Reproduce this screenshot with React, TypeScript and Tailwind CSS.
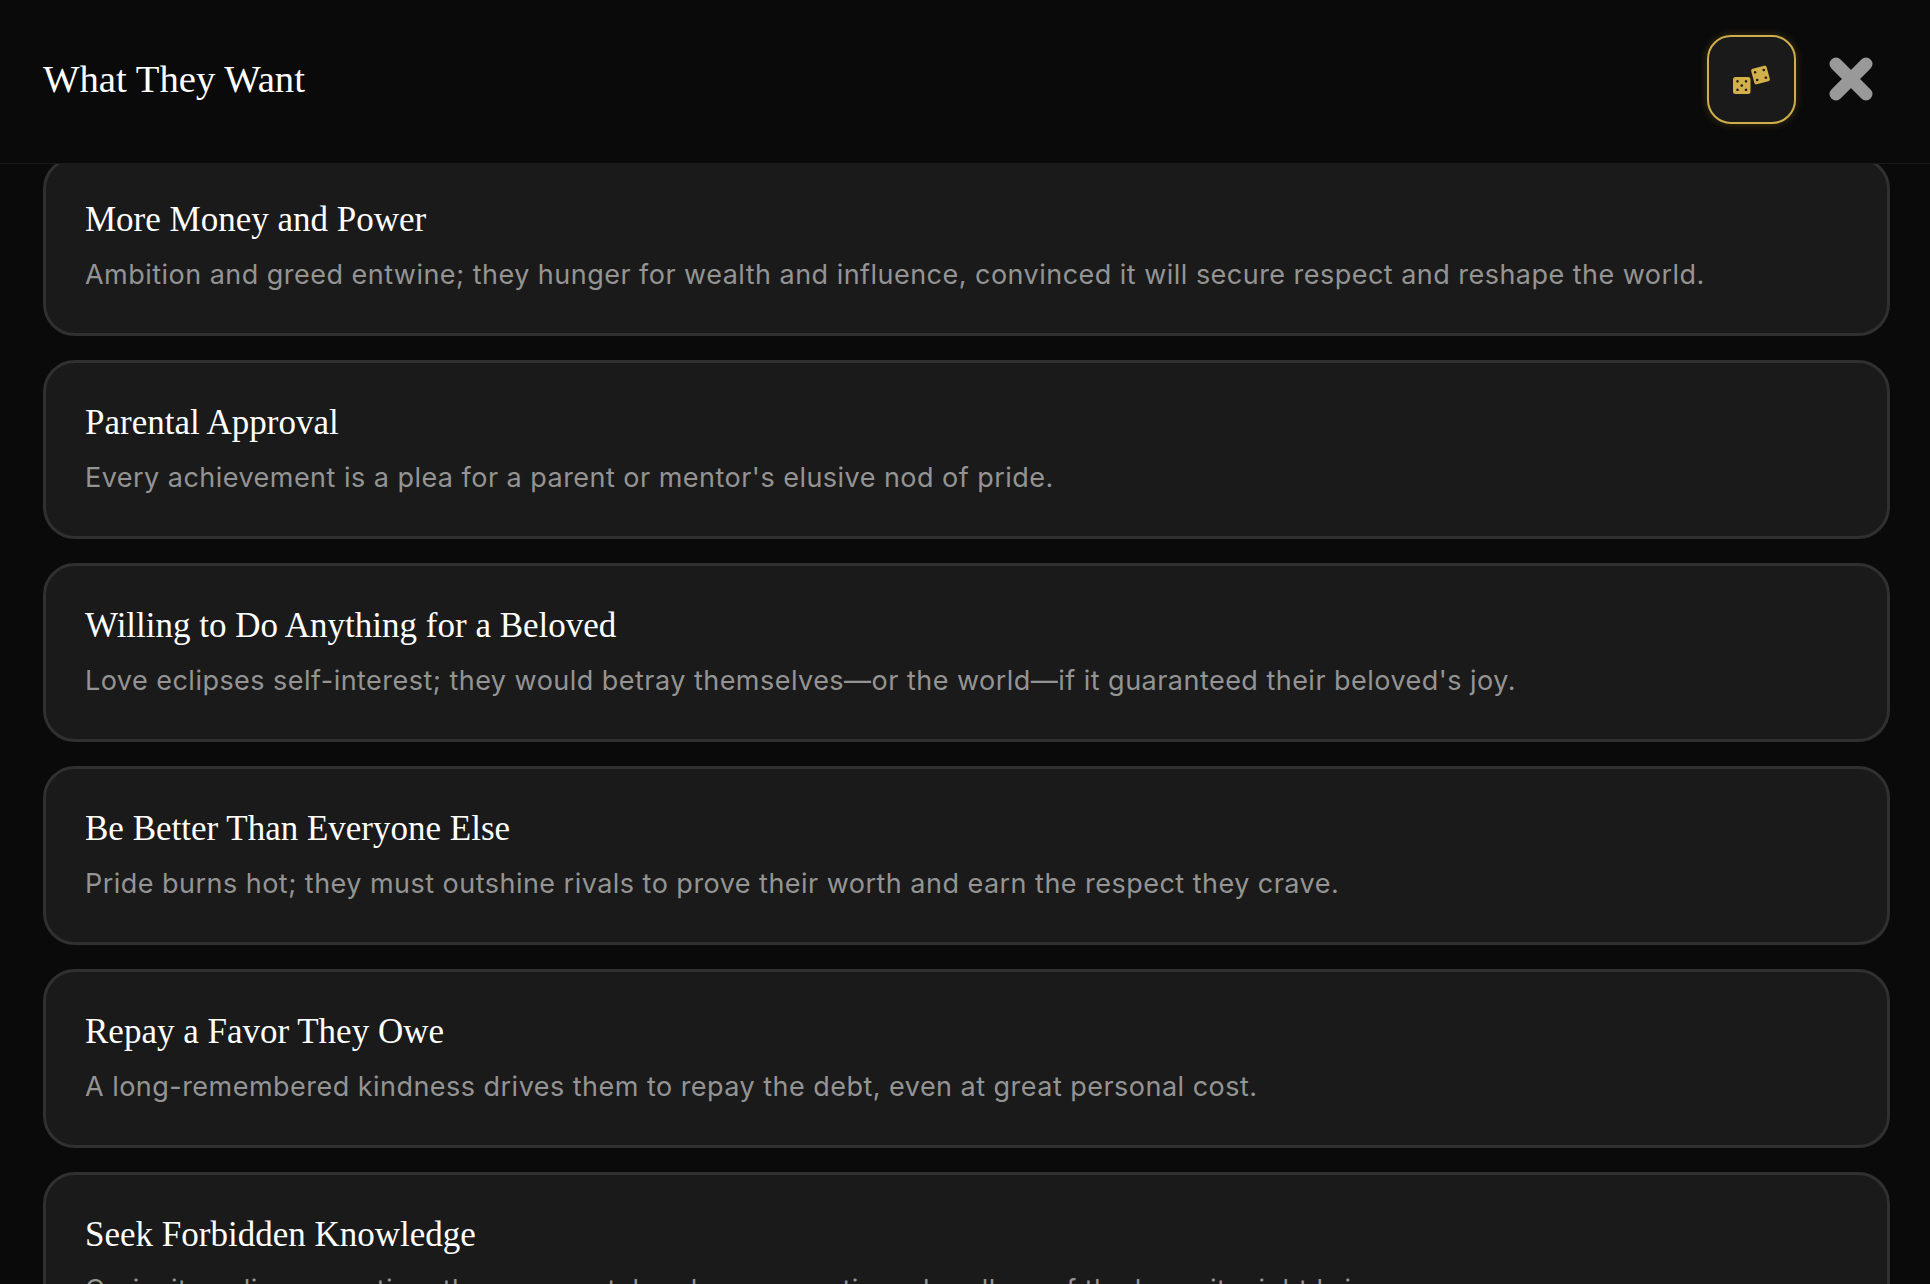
const items = [
  ["More Money and Power", "Ambition and greed entwine; they hunger for wealth and influence, convinced it will secure respect and reshape the world."],
  ["Parental Approval", "Every achievement is a plea for a parent or mentor's elusive nod of pride."],
  ["Willing to Do Anything for a Beloved", "Love eclipses self-interest; they would betray themselves—or the world—if it guaranteed their beloved's joy."],
  ["Be Better Than Everyone Else", "Pride burns hot; they must outshine rivals to prove their worth and earn the respect they crave."],
  ["Repay a Favor They Owe", "A long-remembered kindness drives them to repay the debt, even at great personal cost."],
  ["Seek Forbidden Knowledge", "Curiosity eclipses caution; they pursue taboo lore or creations, heedless of the harm it might bring."],
];

function Dice() {
  return (
    <svg width="37" height="29" viewBox="0 0 37 29" fill="#d4b04a">
      <path
        fillRule="evenodd"
        d="M2.500 12h12.500a2.500 2.500 0 0 1 2.500 2.500v12a2.500 2.500 0 0 1-2.500 2.500H2.500a2.500 2.500 0 0 1-2.500-2.500v-12a2.500 2.500 0 0 1 2.500-2.500ZM4.500 15a1.300 1.300 0 1 0 .01 0ZM13 15a1.300 1.300 0 1 0 .01 0ZM8.750 19.200a1.300 1.300 0 1 0 .01 0ZM4.500 23.500a1.300 1.300 0 1 0 .01 0ZM13 23.500a1.300 1.300 0 1 0 .01 0Z"
      />
      <g transform="rotate(-15 27.500 10)">
        <path
          fillRule="evenodd"
          d="M21.500 2h12a2 2 0 0 1 2 2v12a2 2 0 0 1-2 2h-12a2 2 0 0 1-2-2V4a2 2 0 0 1 2-2ZM23 4.700a1.300 1.300 0 1 0 .01 0ZM32 4.700a1.300 1.300 0 1 0 .01 0ZM23 12.700a1.300 1.300 0 1 0 .01 0ZM32 12.700a1.300 1.300 0 1 0 .01 0Z"
        />
      </g>
    </svg>
  );
}

export default function App() {
  return (
    <div className="flex h-[1284px] flex-col overflow-hidden bg-[#0a0a0a] font-['Inter',sans-serif]">
      <header className="relative z-10 flex h-[164px] shrink-0 items-center justify-between border-b border-[#1a1a1a] bg-[#0a0a0a] pb-[5px] pl-[43px] pr-[57px]">
        <h1 className="font-['Liberation_Serif',serif] text-[38.700px] leading-none text-white">What They Want</h1>
        <div className="flex items-center gap-[33px]">
          <button className="flex h-[89px] w-[89px] items-center justify-center rounded-[24px] border-2 border-[#cfae4b] bg-[#1a1a1a] shadow-[0_0_8px_rgba(212,175,74,0.25)]">
            <Dice />
          </button>
          <svg width="44" height="44" viewBox="0 0 44 44" stroke="#999999" strokeWidth="13" strokeLinecap="round">
            <path d="M7 7 37 37M37 7 7 37" />
          </svg>
        </div>
      </header>
      <main className="-mt-[7px] flex flex-col gap-[24px] pl-[43px] pr-[40px]">
        {items.map(([title, desc]) => (
          <section key={title} className="h-[179px] shrink-0 rounded-[32px] border-[3px] border-[#303030] bg-[#1a1a1a] px-[39px] pt-[38px]">
            <h2 className="font-['Liberation_Serif',serif] text-[35px] leading-[44px] text-white">{title}</h2>
            <p className="mt-[13px] text-[27px] leading-[40px] tracking-[0.47px] text-[#949494]">{desc}</p>
          </section>
        ))}
      </main>
    </div>
  );
}
